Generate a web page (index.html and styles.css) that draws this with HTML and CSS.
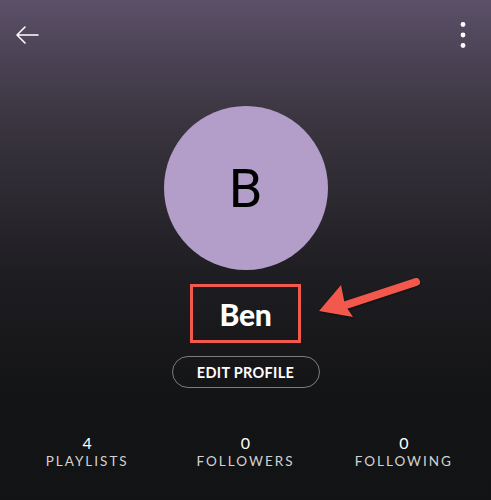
FILE: index.html
```html
<!DOCTYPE html>
<html lang="en">

<head>
  <meta charset="UTF-8">
  <meta name="viewport" content="width=device-width, initial-scale=1.0">
  <title>Profile</title>
  <link rel="stylesheet" href="styles.css">
</head>

<body>
  <div class="profile">
    <div class="topbar">
      <svg class="back" width="26" height="20" viewBox="0 0 26 20">
        <path d="M24 10H3M11 2L3 10l8 8" fill="none" stroke="#fff" stroke-width="1.6" stroke-linecap="round" stroke-linejoin="round" />
      </svg>
      <svg class="more" width="8" height="28" viewBox="0 0 8 28">
        <circle cx="4" cy="3.5" r="2.4" fill="#fff" />
        <circle cx="4" cy="14" r="2.4" fill="#fff" />
        <circle cx="4" cy="24.5" r="2.4" fill="#fff" />
      </svg>
    </div>
    <div class="avatar">B</div>
    <div class="name-row">
      <div class="name-box">
        <h1 class="name">Ben</h1>
      </div>
      <svg class="callout" width="110" height="50" viewBox="0 0 110 50">
        <path d="M98 8L28 31" stroke="#f3584c" stroke-width="8" stroke-linecap="round" />
        <path d="M1 37L23 11L27 31L35 43Z" fill="#f3584c" />
      </svg>
    </div>
    <button class="edit">EDIT PROFILE</button>
    <div class="stats">
      <div class="stat">
        <span class="num">4</span>
        <span class="label">PLAYLISTS</span>
      </div>
      <div class="stat">
        <span class="num">0</span>
        <span class="label">FOLLOWERS</span>
      </div>
      <div class="stat">
        <span class="num">0</span>
        <span class="label">FOLLOWING</span>
      </div>
    </div>
  </div>
</body>

</html>
```

FILE: styles.css
```css
body {
  margin: 0;
  font-family: "Lato", "Noto Sans", sans-serif;
}

.profile {
  width: 491px;
  height: 500px;
  display: flex;
  flex-direction: column;
  align-items: center;
  background: linear-gradient(180deg, #5b5068 0%, #3a3540 24%, #1e1d21 55%, #131416 80%, #121315 100%);
  color: #fff;
}

.topbar {
  align-self: stretch;
  height: 50px;
  display: flex;
  justify-content: space-between;
  align-items: center;
  padding: 10px 24px 0 14px;
}

.avatar {
  width: 164px;
  height: 164px;
  margin-top: 46px;
  border-radius: 50%;
  background: #b39dc9;
  color: #000;
  font-family: Roboto, sans-serif;
  font-size: 54px;
  display: flex;
  justify-content: center;
  align-items: center;
}

.name-row {
  position: relative;
  margin-top: 14px;
}

.name-box {
  width: 105px;
  height: 53px;
  border: 3px solid #f3584c;
  display: flex;
  justify-content: center;
  align-items: center;
}

.name {
  margin: 0;
  font-size: 30px;
  font-weight: 900;
  letter-spacing: -0.3px;
}

.callout {
  position: absolute;
  left: 128px;
  top: -10px;
  filter: drop-shadow(0 1px 1px rgba(0, 0, 0, 0.5));
}

.edit {
  margin-top: 13px;
  width: 148px;
  height: 32px;
  border: 1px solid #7d7c80;
  border-radius: 16px;
  background: transparent;
  color: #fff;
  font-family: "Lato", sans-serif;
  font-size: 14.5px;
  font-weight: 700;
  letter-spacing: 0.3px;
}

.stats {
  align-self: stretch;
  display: flex;
  padding: 0 8px;
  margin-top: 46px;
}

.stat {
  flex: 1;
  display: flex;
  flex-direction: column;
  align-items: center;
}

.num {
  font-size: 16px;
  line-height: 18px;
}

.label {
  margin-top: 1px;
  color: #d2d2d2;
  font-size: 13.5px;
  letter-spacing: 2px;
}
```
